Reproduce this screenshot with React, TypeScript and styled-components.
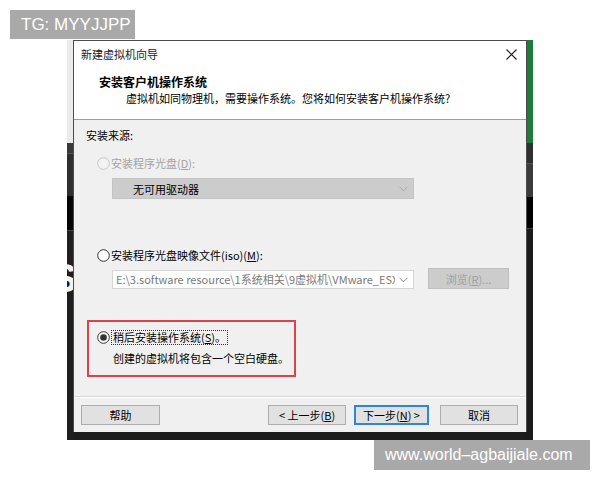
import React from 'react'
import styled, { createGlobalStyle } from 'styled-components'

const UI_FONT = '"Noto Sans CJK SC", "Noto Sans", sans-serif'

const GlobalStyle = createGlobalStyle`
  html, body {
    margin: 0;
    padding: 0;
    background: #ffffff;
  }
  body {
    font-family: ${UI_FONT};
  }
`

type RadioState = 'disabled' | 'off' | 'on'

const RadioIcon: React.FC<{ state: RadioState }> = ({ state }) => (
  <svg width="13" height="13" viewBox="0 0 13 13">
    <circle
      cx="6.5"
      cy="6.5"
      r="5.8"
      fill={state === 'disabled' ? '#f2f2f2' : '#ffffff'}
      stroke={state === 'disabled' ? '#c8c8c8' : '#333333'}
      strokeWidth="1"
    />
    {state === 'on' && <circle cx="6.5" cy="6.5" r="3.3" fill="#333333" />}
  </svg>
)

const Chevron: React.FC<{ color: string }> = ({ color }) => (
  <svg width="9" height="6" viewBox="0 0 9 6">
    <path d="M0.5 0.8 L4.5 4.8 L8.5 0.8" fill="none" stroke={color} strokeWidth="1" />
  </svg>
)

const CloseIcon = () => (
  <svg width="11" height="11" viewBox="0 0 11 11">
    <path d="M0.5 0.5 L10.5 10.5 M10.5 0.5 L0.5 10.5" stroke="#1a1a1a" strokeWidth="1.1" />
  </svg>
)

const App: React.FC = () => {
  return (
    <Page>
      <GlobalStyle />
      <Backdrop>
        <LeftStrip>
          <StripSeg h={103} bg="#ebebeb" />
          <StripSeg h={10} bg="#3a3a3a" />
          <StripSeg h={43} bg="#2f2f2f" line="#5a5a5a" />
          <StripSeg h={34} bg="#050505" />
          <StripSeg h={33} bg="#202020" line="#444" />
          <GlyphSeg>
            <span>S</span>
          </GlyphSeg>
          <StripSeg h={147} bg="#1e1e1e" />
        </LeftStrip>

        <Dialog>
          <TitleBar>
            <TitleText>新建虚拟机向导</TitleText>
            <CloseIcon />
          </TitleBar>

          <Header>
            <Heading>安装客户机操作系统</Heading>
            <SubHeading>虚拟机如同物理机，需要操作系统。您将如何安装客户机操作系统?</SubHeading>
          </Header>

          <Content>
            <SectionLabel>安装来源:</SectionLabel>

            <OptionRow top={6} disabled>
              <RadioIcon state="disabled" />
              <span>
                安装程序光盘(<u>D</u>):
              </span>
            </OptionRow>
            <DriveSelect>
              <span>无可用驱动器</span>
              <Chevron color="#a8a8a8" />
            </DriveSelect>

            <OptionRow top={49}>
              <RadioIcon state="off" />
              <span>
                安装程序光盘映像文件(iso)(<u>M</u>):
              </span>
            </OptionRow>
            <IsoRow>
              <IsoCombo>
                <IsoPath>E:\3.software resource\1系统相关\9虚拟机\VMware_ESXi</IsoPath>
                <Chevron color="#8a8a8a" />
              </IsoCombo>
              <BrowseButton>
                浏览(<u>R</u>)...
              </BrowseButton>
            </IsoRow>

            <Highlight>
              <OptionRow top={0}>
                <RadioIcon state="on" />
                <FocusLabel>
                  稍后安装操作系统(<u>S</u>)。
                </FocusLabel>
              </OptionRow>
              <Hint>创建的虚拟机将包含一个空白硬盘。</Hint>
            </Highlight>
          </Content>

          <Footer>
            <WizardButton w={79}>帮助</WizardButton>
            <ButtonGroup>
              <WizardButton w={78}>
                &lt; 上一步(<u>B</u>)
              </WizardButton>
              <WizardButton w={75} primary>
                下一步(<u>N</u>) &gt;
              </WizardButton>
              <WizardButton w={78} gap={11}>
                取消
              </WizardButton>
            </ButtonGroup>
          </Footer>
        </Dialog>

        <RightStrip>
          <StripSeg h={103} bg="#1d7b3b" />
          <StripSeg h={20} bg="#303030" />
          <StripSeg h={34} bg="#3b3b3b" line="#555" />
          <StripSeg h={31} bg="#000000" />
          <StripSeg h={212} bg="#1b1b1b" line="#444" />
        </RightStrip>
      </Backdrop>

      <TopMark>TG: MYYJJPP</TopMark>
      <BottomMark>www.world–agbaijiale.com</BottomMark>
    </Page>
  )
}

export default App

// ========================================
// STYLED COMPONENTS
// ========================================

const Page = styled.div`
  position: relative;
  width: 600px;
  height: 480px;
  padding: 40px 0 0 67px;
  box-sizing: border-box;
  background: #ffffff;
  overflow: hidden;
`

const Backdrop = styled.div`
  width: 466px;
  height: 400px;
  display: flex;
  align-items: flex-start;
  background: #1c1c1c;
`

const LeftStrip = styled.div`
  width: 6px;
  height: 400px;
  display: flex;
  flex-direction: column;
  flex-shrink: 0;
`

const RightStrip = styled(LeftStrip)``

const StripSeg = styled.div<{ h: number; bg: string; line?: string }>`
  height: ${p => p.h}px;
  flex-shrink: 0;
  background: ${p => p.bg};
  border-top: ${p => (p.line ? `1px solid ${p.line}` : 'none')};
  box-sizing: border-box;
`

const GlyphSeg = styled.div`
  height: 30px;
  flex-shrink: 0;
  display: flex;
  justify-content: flex-end;
  align-items: center;
  overflow: hidden;
  background: #1e1e1e;

  span {
    font-family: "Liberation Sans", sans-serif;
    font-weight: 700;
    font-size: 40px;
    line-height: 30px;
    color: #f2f2f2;
    margin-right: -4px;
  }
`

const Dialog = styled.div`
  width: 454px;
  height: 392px;
  flex-shrink: 0;
  box-sizing: border-box;
  border: 1px solid #4c4c4c;
  border-bottom: none;
  display: flex;
  flex-direction: column;
  background: #f0f0f0;
  font-family: ${UI_FONT};
  font-size: 11px;
  color: #000000;
`

const TitleBar = styled.div`
  height: 26px;
  display: flex;
  align-items: center;
  justify-content: space-between;
  padding: 0 9px 0 7px;
  background: #ffffff;
`

const TitleText = styled.span`
  font-size: 11px;
  line-height: 26px;
  color: #1a1a1a;
`

const Header = styled.div`
  height: 53px;
  box-sizing: border-box;
  padding: 7px 0 0 25px;
  background: #ffffff;
  border-bottom: 1px solid #a0a0a0;
`

const Heading = styled.div`
  font-size: 12px;
  font-weight: 700;
  line-height: 16px;
`

const SubHeading = styled.div`
  font-size: 11px;
  line-height: 16px;
  margin-left: 27px;
`

const Content = styled.div`
  flex: 1;
  display: flex;
  flex-direction: column;
  align-items: flex-start;
  padding-left: 12px;
`

const SectionLabel = styled.div`
  height: 30px;
  line-height: 30px;
`

const OptionRow = styled.div<{ top: number; disabled?: boolean }>`
  height: 15px;
  display: flex;
  align-items: center;
  gap: 1px;
  margin: ${p => p.top}px 0 0 11px;
  line-height: 15px;
  color: ${p => (p.disabled ? '#a3a3a3' : '#000000')};

  svg {
    flex-shrink: 0;
  }

  u {
    text-decoration-thickness: 1px;
    text-underline-offset: 1px;
  }
`

const DriveSelect = styled.div`
  width: 302px;
  height: 21px;
  margin: 7px 0 0 26px;
  box-sizing: border-box;
  display: flex;
  align-items: center;
  justify-content: space-between;
  padding: 0 5px 0 20px;
  background: #cccccc;
  border: 1px solid #c4c4c4;
  color: #000000;
`

const IsoRow = styled.div`
  display: flex;
  align-items: flex-end;
  gap: 14px;
  margin: 5px 0 0 26px;
`

const IsoCombo = styled.div`
  width: 302px;
  height: 19px;
  box-sizing: border-box;
  display: flex;
  align-items: center;
  justify-content: space-between;
  gap: 4px;
  padding: 0 5px 0 3px;
  background: #ffffff;
  border: 1px solid #d6d6d6;
  color: #7a7a7a;
`

const IsoPath = styled.span`
  flex: 1;
  overflow: hidden;
  white-space: nowrap;
  line-height: 17px;
`

const BrowseButton = styled.div`
  width: 81px;
  height: 21px;
  box-sizing: border-box;
  display: flex;
  align-items: center;
  justify-content: center;
  background: #cccccc;
  border: 1px solid #bfbfbf;
  color: #a0a0a0;

  u {
    text-underline-offset: 1px;
  }
`

const Highlight = styled.div`
  width: 209px;
  height: 57px;
  box-sizing: border-box;
  margin: 31px 0 0 1px;
  padding-top: 8px;
  border: 2px solid #d9434a;
  display: flex;
  flex-direction: column;
  align-items: flex-start;

  ${OptionRow} {
    margin-left: 8px;
  }
`

const FocusLabel = styled.span`
  padding: 0 1px;
  border: 1px dotted #333333;
  line-height: 13px;
`

const Hint = styled.div`
  margin: 6px 0 0 24px;
  line-height: 15px;
`

const Footer = styled.div`
  height: 36px;
  box-sizing: border-box;
  display: flex;
  align-items: flex-start;
  justify-content: space-between;
  padding: 8px 8px 0 7px;
  border-top: 1px solid #d8d8d8;
  box-shadow: inset 0 1px 0 #ffffff;
`

const ButtonGroup = styled.div`
  display: flex;
  gap: 8px;
`

const WizardButton = styled.div<{ w: number; primary?: boolean; gap?: number }>`
  width: ${p => p.w}px;
  height: 20px;
  box-sizing: border-box;
  display: flex;
  align-items: center;
  justify-content: center;
  margin-left: ${p => (p.gap ? p.gap - 8 : 0)}px;
  background: #e1e1e1;
  border: ${p => (p.primary ? '2px solid #2f86d6' : '1px solid #adadad')};
  color: #000000;
  font-size: 11px;

  u {
    text-underline-offset: 1px;
  }
`

const Watermark = styled.div`
  position: absolute;
  display: flex;
  align-items: center;
  box-sizing: border-box;
  background: #a9a9a9;
  color: #ffffff;
  font-family: "Liberation Sans", Arial, sans-serif;
`

const TopMark = styled(Watermark)`
  left: 10px;
  top: 10px;
  width: 125px;
  height: 29px;
  padding-left: 11px;
  font-size: 17px;
`

const BottomMark = styled(Watermark)`
  left: 374px;
  top: 440px;
  width: 216px;
  height: 30px;
  padding-left: 11px;
  font-size: 16px;
`
